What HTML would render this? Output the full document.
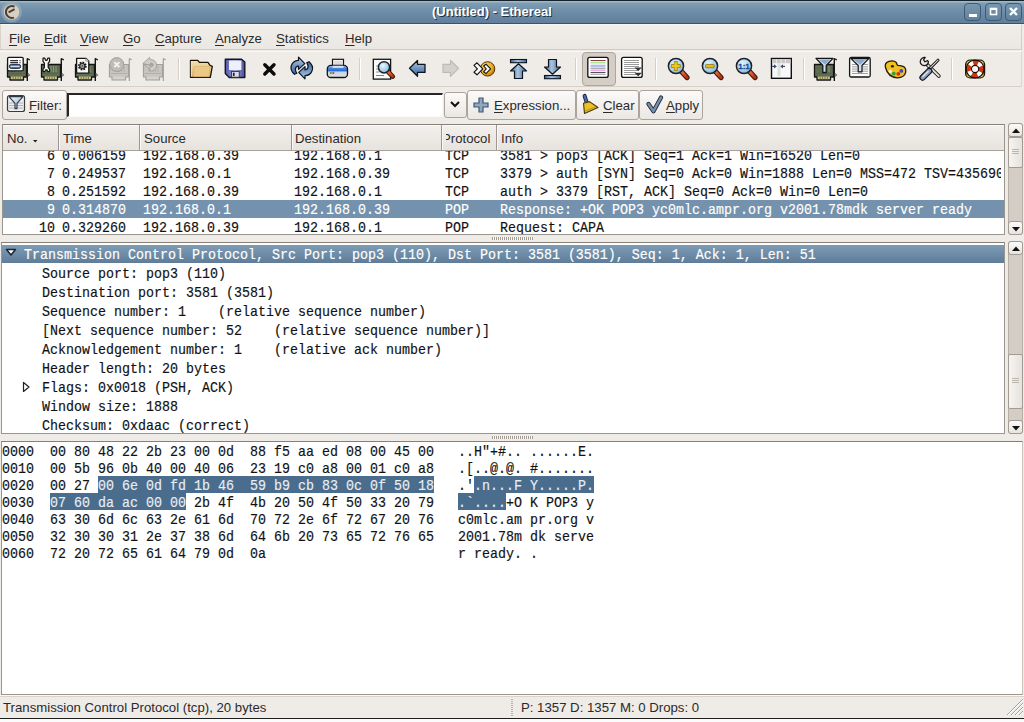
<!DOCTYPE html>
<html><head><meta charset="utf-8"><title>Ethereal</title><style>
*{margin:0;padding:0;box-sizing:border-box}
html,body{width:1024px;height:722px;overflow:hidden;background:#efebe7;font-family:"Liberation Sans",sans-serif;font-size:13.2px;color:#2a2a2a}
.a{position:absolute}
.u{text-decoration:underline;text-underline-offset:2px}
.m{font-family:"Liberation Mono",monospace;font-size:13.333px;white-space:pre;color:#111;transform:scaleY(1.11);transform-origin:0 0;-webkit-text-stroke:0.15px currentColor}
.btn{position:absolute;border:1px solid #aaa49d;border-radius:3px;background:linear-gradient(#fbfaf9,#ebe7e3)}
.sb{position:absolute;width:15px;background:#d4cdc5;border:1px solid #b5aea6;border-radius:3px}
.sbb{position:absolute;left:-1px;width:15px;height:14px;border:1px solid #a29b93;border-radius:3px;background:linear-gradient(#fcfbfa,#e8e3de)}
.thumb{position:absolute;left:-1px;width:15px;border:1px solid #a29b93;border-radius:2px;background:linear-gradient(90deg,#f6f4f2,#e6e1dc)}
.sel{background:#7492ad;color:#fff}
.ic{position:absolute;top:57px;width:24px;height:24px;overflow:visible}
.vsep{position:absolute;top:58px;width:2px;height:22px;border-left:1px solid #d5cfc8;border-right:1px solid #fff}
</style></head><body>
<div class="a" style="left:0;top:0;width:1024px;height:24px;background:linear-gradient(#a3b6c3 0,#a3b6c3 1px,#7e9db3 2px,#6c8ca8 50%,#617f9b 100%);border-top:1px solid #14222c;border-bottom:1px solid #3f5263"></div>
<svg class="a" style="left:0px;top:1px" width="24" height="23" viewBox="0 0 24 23"><circle cx="11.5" cy="11" r="10.5" fill="#9fb2bf" opacity=".55"/><circle cx="11.5" cy="11" r="7.8" fill="#d6cfc2"/><path d="M14.6 5.6 A6 6 0 1 0 14 16.6" fill="none" stroke="#4a4038" stroke-width="2"/><path d="M8.6 11.4 L14.6 8.2" stroke="#4a4038" stroke-width="2"/></svg>
<div class="a" style="left:433px;top:5px;color:#1e3346;font-weight:bold;font-size:13px;white-space:pre">(Untitled) - Ethereal</div>
<div class="a" style="left:432px;top:4px;color:#fff;font-weight:bold;font-size:13px;white-space:pre">(Untitled) - Ethereal</div>
<div class="a" style="left:964px;top:3px;width:17px;height:18px;border:1px solid #3e5b75;border-radius:4px;background:linear-gradient(#7898b0,#62819c)"></div>
<div class="a" style="left:985px;top:3px;width:17px;height:18px;border:1px solid #3e5b75;border-radius:4px;background:linear-gradient(#7898b0,#62819c)"></div>
<div class="a" style="left:1005px;top:3px;width:17px;height:18px;border:1px solid #3e5b75;border-radius:4px;background:linear-gradient(#7898b0,#62819c)"></div>
<svg class="a" style="left:964px;top:3px" width="60" height="18"><rect x="5" y="11" width="8" height="3" fill="#fff"/><rect x="26.5" y="5.5" width="6" height="6" fill="none" stroke="#fff" stroke-width="1.6"/><rect x="26" y="5" width="7" height="2" fill="#fff"/><path d="M46 5 L53 12 M53 5 L46 12" stroke="#fff" stroke-width="2.4"/></svg>
<div class="a" style="left:0;top:24px;width:1022px;height:26px;border-top:1px solid #f6f4f2;border-left:1px solid #d9d3cc;border-bottom:1px solid #d3ccc4;border-right:1px solid #d3ccc4;background:linear-gradient(#f1eee9,#ebe7e2)"></div>
<div class="a" style="left:9px;top:31px"><span class="u">F</span>ile</div>
<div class="a" style="left:44px;top:31px"><span class="u">E</span>dit</div>
<div class="a" style="left:80px;top:31px"><span class="u">V</span>iew</div>
<div class="a" style="left:123px;top:31px"><span class="u">G</span>o</div>
<div class="a" style="left:155px;top:31px"><span class="u">C</span>apture</div>
<div class="a" style="left:215px;top:31px"><span class="u">A</span>nalyze</div>
<div class="a" style="left:276px;top:31px"><span class="u">S</span>tatistics</div>
<div class="a" style="left:345px;top:31px"><span class="u">H</span>elp</div>
<div class="a" style="left:0;top:51px;width:1022px;height:36px;border-top:1px solid #f9f8f6;border-bottom:1px solid #d6d0c9;border-right:1px solid #ddd7d0"></div>
<div class="a" style="left:582px;top:52px;width:34px;height:34px;border:1px solid #aca59d;border-radius:4px;background:#d4cec7"></div>
<div class="vsep" style="left:178px"></div>
<div class="vsep" style="left:359px"></div>
<div class="vsep" style="left:575px"></div>
<div class="vsep" style="left:655px"></div>
<div class="vsep" style="left:803px"></div>
<div class="vsep" style="left:951px"></div>
<svg class="a" style="left:0;top:0;overflow:visible" width="1024" height="90" viewBox="0 0 1024 90"><defs>
<linearGradient id="gBlue" x1="0" y1="0" x2="0" y2="1"><stop offset="0" stop-color="#b9d0e8"/><stop offset=".5" stop-color="#6f95bf"/><stop offset="1" stop-color="#3e6592"/></linearGradient>
<linearGradient id="gBlueH" x1="0" y1="0" x2="1" y2="0"><stop offset="0" stop-color="#3e6592"/><stop offset=".45" stop-color="#a9c4e0"/><stop offset="1" stop-color="#456c98"/></linearGradient>
<linearGradient id="gFold" x1="0" y1="0" x2="0" y2="1"><stop offset="0" stop-color="#f3e2b0"/><stop offset="1" stop-color="#d9b36c"/></linearGradient>
<linearGradient id="gFlop" x1="0" y1="0" x2="1" y2="0"><stop offset="0" stop-color="#5559a8"/><stop offset=".5" stop-color="#9a9fd6"/><stop offset="1" stop-color="#4b4f98"/></linearGradient>
<radialGradient id="gLens" cx=".4" cy=".35" r=".7"><stop offset="0" stop-color="#e8f6ff"/><stop offset=".6" stop-color="#a8d4ee"/><stop offset="1" stop-color="#7da8c8"/></radialGradient>
<radialGradient id="gGold" cx=".35" cy=".35" r=".7"><stop offset="0" stop-color="#ffe070"/><stop offset=".7" stop-color="#e8a820"/><stop offset="1" stop-color="#b07010"/></radialGradient>
<linearGradient id="gHandle" x1="0" y1="0" x2="1" y2="1"><stop offset="0" stop-color="#f07040"/><stop offset="1" stop-color="#b03010"/></linearGradient>
</defs><g transform="translate(4 54)"><g>
 <path d="M3.5 10.5 H22.5 V23 H19.5 V26 H6 V23 H3.5 Z" fill="#5f6e52" stroke="#151515" stroke-width="1.3" stroke-linejoin="round"/>
 <path d="M5 19.5 H21 M5 14 H21" stroke="#55654a" stroke-width="1"/>
 <path d="M13 12v6M15.5 12v6M18 12v6" stroke="#93a07e" stroke-width=".9"/>
 <rect x="6.8" y="22.6" width="12" height="2.6" fill="#c9c38e"/>
 <path d="M9.2 22.6v2.6M11.6 22.6v2.6M14 22.6v2.6M16.4 22.6v2.6" stroke="#6e6e48" stroke-width=".9"/>
 <path d="M23.3 4.5 V27" stroke="#151515" stroke-width="1.4"/>
 <path d="M23 4.5 L25.8 5.8" stroke="#151515" stroke-width="1.3"/>
 <path d="M23.8 19 L25.8 21.2 L23.8 22.4" fill="#9aa08e" stroke="#444" stroke-width=".7"/>
</g><rect x="3.6" y="3.3" width="15.6" height="13.6" rx="1.3" fill="#fdfdfd" stroke="#151515" stroke-width="1.3"/><path d="M6.2 6.6H14M6.2 8.6H14" stroke="#333" stroke-width="1.1"/><path d="M15.5 6.6h1M15.5 8.6h1" stroke="#333" stroke-width="1.1"/><rect x="5.3" y="10.4" width="11.4" height="4" rx="2" fill="#5b7aa6" stroke="#1d2b44" stroke-width="1"/><path d="M6.5 12.4H15.5" stroke="#dfe8f4" stroke-width="1"/></g><g transform="translate(38 54)"><g>
 <path d="M3.5 10.5 H22.5 V23 H19.5 V26 H6 V23 H3.5 Z" fill="#5f6e52" stroke="#151515" stroke-width="1.3" stroke-linejoin="round"/>
 <path d="M5 19.5 H21 M5 14 H21" stroke="#55654a" stroke-width="1"/>
 <path d="M13 12v6M15.5 12v6M18 12v6" stroke="#93a07e" stroke-width=".9"/>
 <rect x="6.8" y="22.6" width="12" height="2.6" fill="#c9c38e"/>
 <path d="M9.2 22.6v2.6M11.6 22.6v2.6M14 22.6v2.6M16.4 22.6v2.6" stroke="#6e6e48" stroke-width=".9"/>
 <path d="M23.3 4.5 V27" stroke="#151515" stroke-width="1.4"/>
 <path d="M23 4.5 L25.8 5.8" stroke="#151515" stroke-width="1.3"/>
 <path d="M23.8 19 L25.8 21.2 L23.8 22.4" fill="#9aa08e" stroke="#444" stroke-width=".7"/>
</g><path d="M5 4.2 L6.8 4.2 L7.6 6.3 L9 6.3 L9.8 4.2 L11.6 4.2 L11.6 7.4 L10.2 9.2 L10.2 13.5 L11.6 15.3 L11.6 17.6 L9.8 17.6 L9 15.9 L7.6 15.9 L6.8 17.6 L5 17.6 L5 15.3 L6.4 13.5 L6.4 9.2 L5 7.4 Z" fill="#f4f4f4" stroke="#151515" stroke-width="1.2" stroke-linejoin="round"/></g><g transform="translate(72 54)"><g>
 <path d="M3.5 10.5 H22.5 V23 H19.5 V26 H6 V23 H3.5 Z" fill="#5f6e52" stroke="#151515" stroke-width="1.3" stroke-linejoin="round"/>
 <path d="M5 19.5 H21 M5 14 H21" stroke="#55654a" stroke-width="1"/>
 <path d="M13 12v6M15.5 12v6M18 12v6" stroke="#93a07e" stroke-width=".9"/>
 <rect x="6.8" y="22.6" width="12" height="2.6" fill="#c9c38e"/>
 <path d="M9.2 22.6v2.6M11.6 22.6v2.6M14 22.6v2.6M16.4 22.6v2.6" stroke="#6e6e48" stroke-width=".9"/>
 <path d="M23.3 4.5 V27" stroke="#151515" stroke-width="1.4"/>
 <path d="M23 4.5 L25.8 5.8" stroke="#151515" stroke-width="1.3"/>
 <path d="M23.8 19 L25.8 21.2 L23.8 22.4" fill="#9aa08e" stroke="#444" stroke-width=".7"/>
</g><path d="M4.6 4.3 H13.8 L16.8 7.2 V19.2 H4.6 Z" fill="#f7f7f7" stroke="#151515" stroke-width="1.3" stroke-linejoin="round"/><path d="M13.8 4.3 V7.2 H16.8" fill="#ddd" stroke="#777" stroke-width=".6"/><circle cx="10.3" cy="12" r="3.6" fill="#9a9a9a" stroke="#151515" stroke-width="1.6" stroke-dasharray="1.6 1.2"/><circle cx="10.3" cy="12" r="2.6" fill="#a5a5a5" stroke="#151515" stroke-width="1"/><circle cx="10.3" cy="12" r=".8" fill="#333"/></g><g transform="translate(106 54)"><g opacity="1">
 <path d="M3.5 10.5 H22.5 V23 H19.5 V26 H6 V23 H3.5 Z" fill="#c8c5c0" stroke="#a4a19c" stroke-width="1.2"/>
 <path d="M5 19.5 H21 M13 12v6M15.5 12v6M18 12v6" stroke="#b0ada8" stroke-width=".9"/>
 <rect x="6.8" y="22.6" width="12" height="2.6" fill="#d4d2ce"/>
 <path d="M23.3 4.5 V27 M23 4.5 L25.8 5.8" stroke="#a4a19c" stroke-width="1.2"/>
</g><circle cx="10.8" cy="10.6" r="7" fill="#bfbcb7" stroke="#a29f9a" stroke-width="1"/><path d="M8.3 8.1 L13.3 13.1 M13.3 8.1 L8.3 13.1" stroke="#f4f2f0" stroke-width="2"/></g><g transform="translate(140 54)"><g opacity="1">
 <path d="M3.5 10.5 H22.5 V23 H19.5 V26 H6 V23 H3.5 Z" fill="#c8c5c0" stroke="#a4a19c" stroke-width="1.2"/>
 <path d="M5 19.5 H21 M13 12v6M15.5 12v6M18 12v6" stroke="#b0ada8" stroke-width=".9"/>
 <rect x="6.8" y="22.6" width="12" height="2.6" fill="#d4d2ce"/>
 <path d="M23.3 4.5 V27 M23 4.5 L25.8 5.8" stroke="#a4a19c" stroke-width="1.2"/>
</g><path d="M2.8 9.6 L9.6 3.4 L10 5.6 Q15.8 5.4 16.6 11 Q16.8 15.8 12 17 L8.6 17 L10.6 12 Q13 12.4 13 10.6 Q12.8 8.8 10.6 9 L10.8 11.2 Z" fill="#cfccc7" stroke="#a29f9a" stroke-width=".9" stroke-linejoin="round"/><path d="M3 9.6 L11 16.4" stroke="#a29f9a" stroke-width=".9"/><circle cx="11.4" cy="11" r="1.6" fill="none" stroke="#a29f9a" stroke-width=".9"/></g><g transform="translate(186 54)"><path d="M4.5 6.3 H11.8 L13.4 8.4 H22 L24 11.3 L26.3 12.4 L24.3 23.4 H4.5 Z" fill="url(#gFold)" stroke="#1b1308" stroke-width="1.3" stroke-linejoin="round"/><path d="M7.3 22.6 L8 13.6 Q8.2 12.4 9.5 12.4 H24.2 L22.8 22.6 Z" fill="#ecc887" stroke="#d6ae68" stroke-width=".6"/><path d="M5.3 7 V22.6" stroke="#fff3d0" stroke-width=".9"/></g><g transform="translate(220 54)"><path d="M5.3 5.3 H21.5 L24.8 8 V23.5 H9.3 L5.3 19.6 Z" fill="url(#gFlop)" stroke="#141428" stroke-width="1.4" stroke-linejoin="round"/><rect x="9" y="6.6" width="12.4" height="9.4" fill="#eef0fa"/><rect x="11.4" y="17.6" width="7.8" height="5.6" fill="#dcdcea" stroke="#23233a" stroke-width=".8"/><rect x="12.9" y="18.7" width="1.7" height="3.3" fill="#222"/></g><path d="M264.8 64.8 L274 74 M274 64.8 L264.8 74" stroke="#0a0a0a" stroke-width="3.4" stroke-linecap="round"/><g transform="translate(286 54)"><path d="M8.5 20.3 Q4 16.5 5.2 12 Q6.8 6.5 12.5 6.3 L12.5 3.2 L18.8 9.6 L12.5 15.4 L12.5 12.2 Q9.8 12.4 9.4 14.8 Q9.3 17.2 10.8 19.3 Z" fill="url(#gBlue)" stroke="#0d1420" stroke-width="1.2" stroke-linejoin="round"/><g transform="rotate(180 15.75 14)"><path d="M8.5 20.3 Q4 16.5 5.2 12 Q6.8 6.5 12.5 6.3 L12.5 3.2 L18.8 9.6 L12.5 15.4 L12.5 12.2 Q9.8 12.4 9.4 14.8 Q9.3 17.2 10.8 19.3 Z" fill="url(#gBlue)" stroke="#0d1420" stroke-width="1.2" stroke-linejoin="round"/></g></g><g transform="translate(322 54)"><defs><linearGradient id="gPr" x1="0" y1="0" x2="0" y2="1"><stop offset="0" stop-color="#d8e6f4"/><stop offset=".2" stop-color="#4a90e8"/><stop offset=".45" stop-color="#2a6ad0"/><stop offset=".55" stop-color="#c8d4e4"/><stop offset="1" stop-color="#e4e2e0"/></linearGradient></defs><rect x="10.5" y="5.3" width="11" height="9" fill="#f2f2f2" stroke="#151515" stroke-width="1.2"/><path d="M12.3 8h7.5M12.3 10h7.5" stroke="#bbb" stroke-width=".8"/><rect x="5.3" y="11.3" width="20.2" height="12.2" rx="3.6" fill="url(#gPr)" stroke="#151515" stroke-width="1.3"/><path d="M10.6 11.6 H21.4 V14 H10.6Z" fill="#eef2f8" opacity=".7"/><rect x="8" y="18.2" width="1.6" height="1.6" fill="#2a8a3a"/><rect x="10.4" y="18.2" width="1.8" height="1.6" fill="#c02828"/></g><g transform="translate(368 54)"><rect x="5.3" y="5.3" width="17.3" height="19.8" fill="#fbfbfb" stroke="#151515" stroke-width="1.3"/><path d="M8 12h3M8 15h3M8 18h3.5M8 21.5h8" stroke="#777" stroke-width=".8"/><path d="M8 21.5h8" stroke="#c06060" stroke-width=".8"/><path d="M20.2 17.8 L24.8 22.6" stroke="#3a1408" stroke-width="4.6" stroke-linecap="round"/><path d="M20.2 17.8 L24.8 22.6" stroke="url(#gHandle)" stroke-width="2.8" stroke-linecap="round"/><circle cx="16" cy="13.3" r="5.6" fill="url(#gLens)" stroke="#1e2228" stroke-width="1.5"/></g><path d="M409.5 68.3 L417.5 60.5 V64.3 H425 V72.4 H417.5 V76.3 Z" fill="url(#gBlue)" stroke="#0d1420" stroke-width="1.3" stroke-linejoin="round"/><path d="M458.5 68.3 L450.5 60.5 V64.3 H443 V72.4 H450.5 V76.3 Z" fill="#d4d1cd" stroke="#bdbab5" stroke-width="1.2" stroke-linejoin="round"/><g transform="translate(470 54)"><circle cx="17.6" cy="14.9" r="7.2" fill="url(#gGold)" stroke="#5a3608" stroke-width="1"/><path d="M4 11.4 L7 8.8 L12.8 14.8 L7 20.8 L4 18.2 L7.4 14.8 Z" fill="#fafafa" stroke="#151515" stroke-width="1.2" stroke-linejoin="round"/><path d="M13.6 12 L16 10.2 L20.6 14.9 L16 19.6 L13.6 17.8 L16.2 14.9 Z" fill="#fafafa" stroke="#151515" stroke-width="1.1" stroke-linejoin="round"/></g><rect x="510.5" y="59.5" width="16" height="3.2" fill="url(#gBlueH)" stroke="#0d1420" stroke-width="1.1"/><path d="M518.5 63.8 L526.5 71 H522.5 V78.5 H514.5 V71 H510.5 Z" fill="url(#gBlueH)" stroke="#0d1420" stroke-width="1.2" stroke-linejoin="round"/><path d="M552.5 74.2 L560.5 67 H556.5 V59.5 H548.5 V67 H544.5 Z" fill="url(#gBlueH)" stroke="#0d1420" stroke-width="1.2" stroke-linejoin="round"/><rect x="544.5" y="75.5" width="16" height="3.2" fill="url(#gBlueH)" stroke="#0d1420" stroke-width="1.1"/><rect x="587.8" y="57.4" width="20.4" height="20" rx="2" fill="#fff" stroke="#111" stroke-width="1.3"/><path d="M590.5 60.5H605.5" stroke="#8a4040" stroke-width="1"/><path d="M590.5 62.6H605.5" stroke="#a8e890" stroke-width="1.8"/><path d="M590.5 65.8H605.5" stroke="#b0bce8" stroke-width="2.2"/><path d="M590.5 68.2H605.5" stroke="#888" stroke-width="1"/><path d="M590.5 70.3H605.5" stroke="#f0a8f0" stroke-width="1.8"/><path d="M590.5 72.5H605.5" stroke="#555" stroke-width="1"/><path d="M590.5 74.3H605.5" stroke="#aaa" stroke-width="1.2"/><rect x="621.6" y="57.4" width="20.6" height="20" rx="2" fill="#fff" stroke="#111" stroke-width="1.3"/><path d="M624 60.5H639M624 62.5H639M624 64.5H639M624 66.5H639M624 68.5H636M624 70.5H639M624 72.5H636M624 74.5H639" stroke="#9a9a9a" stroke-width="1"/><path d="M634.5 67.5 H642 L638.2 71 Z M634.5 72.8 H642 L638.2 76.3 Z" fill="#333"/><g transform="translate(664 54)"><g>
 <path d="M17.5 17.5 L23 23.5" stroke="#3a1408" stroke-width="5.2" stroke-linecap="round"/>
 <path d="M17.5 17.5 L23 23.5" stroke="url(#gHandle)" stroke-width="3.2" stroke-linecap="round"/>
 <circle cx="12" cy="12" r="7.6" fill="url(#gLens)" stroke="#1e2228" stroke-width="1.5"/>
</g><path d="M10.3 7.5h3v3h3v3h-3v3h-3v-3h-3v-3h3z" fill="#f0c818" stroke="#a07808" stroke-width=".8"/></g><g transform="translate(698 54)"><g>
 <path d="M17.5 17.5 L23 23.5" stroke="#3a1408" stroke-width="5.2" stroke-linecap="round"/>
 <path d="M17.5 17.5 L23 23.5" stroke="url(#gHandle)" stroke-width="3.2" stroke-linecap="round"/>
 <circle cx="12" cy="12" r="7.6" fill="url(#gLens)" stroke="#1e2228" stroke-width="1.5"/>
</g><rect x="7.6" y="10.4" width="8.6" height="3.4" rx=".8" fill="#e8b818" stroke="#906808" stroke-width=".8"/></g><g transform="translate(732 54)"><g>
 <path d="M17.5 17.5 L23 23.5" stroke="#3a1408" stroke-width="5.2" stroke-linecap="round"/>
 <path d="M17.5 17.5 L23 23.5" stroke="url(#gHandle)" stroke-width="3.2" stroke-linecap="round"/>
 <circle cx="12" cy="12" r="7.6" fill="url(#gLens)" stroke="#1e2228" stroke-width="1.5"/>
</g><text x="12" y="15.3" text-anchor="middle" font-family="Liberation Sans" font-weight="bold" font-size="8" fill="#1f4e96" stroke="#1f4e96" stroke-width=".3">1:1</text></g><g transform="translate(766 54)"><rect x="5.5" y="4.5" width="19.8" height="19.8" fill="#f8f8f8" stroke="#111" stroke-width="1.4"/><rect x="6.2" y="5.2" width="18.4" height="4" fill="#c8c8c8"/><path d="M10.5 5.2v4M15 5.2v4M19.5 5.2v4" stroke="#eee" stroke-width=".8"/><rect x="11.5" y="9.2" width="3" height="13" fill="#dedede"/><path d="M6.2 12.4H9.5 M15.5 12.4H19" stroke="#3a5068" stroke-width="1.2"/><path d="M10.8 12.4 L8 10.3 V14.5 Z M14.3 12.4 L17 10.3 V14.5 Z" fill="#3a5068"/></g><g transform="translate(810 54)"><g transform="translate(1 0)">
 <path d="M3.5 10.5 H22.5 V23 H19.5 V26 H6 V23 H3.5 Z" fill="#5f6e52" stroke="#151515" stroke-width="1.3" stroke-linejoin="round"/>
 <path d="M5 19.5 H21 M5 14 H21" stroke="#55654a" stroke-width="1"/>
 <path d="M13 12v6M15.5 12v6M18 12v6" stroke="#93a07e" stroke-width=".9"/>
 <rect x="6.8" y="22.6" width="12" height="2.6" fill="#c9c38e"/>
 <path d="M9.2 22.6v2.6M11.6 22.6v2.6M14 22.6v2.6M16.4 22.6v2.6" stroke="#6e6e48" stroke-width=".9"/>
 <path d="M23.3 4.5 V27" stroke="#151515" stroke-width="1.4"/>
 <path d="M23 4.5 L25.8 5.8" stroke="#151515" stroke-width="1.3"/>
 <path d="M23.8 19 L25.8 21.2 L23.8 22.4" fill="#9aa08e" stroke="#444" stroke-width=".7"/>
</g><path d="M6 4.4 H23 L16.2 11.5 V18.5 H12.8 V11.5 Z" fill="#cfdff0" stroke="#151515" stroke-width="1.3" stroke-linejoin="round"/><path d="M8.5 5.6 H20.5 L15 10.5 Z" fill="#8eaacb"/></g><g transform="translate(845 54)"><rect x="4.6" y="3.5" width="20.6" height="19.5" rx="1.5" fill="#fafafa" stroke="#151515" stroke-width="1.3"/><path d="M7 10.5H23M7 12.8H23M7 15H23M7 17.2H23M7 19.5H23" stroke="#a0a0a0" stroke-width="1"/><path d="M6 4.6 H23.8 L17 11.5 V17.8 H13.2 V11.5 Z" fill="#cfdff0" stroke="#151515" stroke-width="1.2" stroke-linejoin="round"/><path d="M8.5 5.6 H21 L15.2 10.6 Z" fill="#8eaacb"/></g><g transform="translate(880 54)"><path d="M5.5 13.5 Q4.3 8.7 9 7.3 Q13.8 6 16.3 8.5 Q17 10.8 17.8 11.4 Q20 11.4 23 12.4 Q26.5 14 25.6 18.6 Q24.3 23.5 17.5 23.8 Q8 23.4 5.5 13.5 Z" fill="#f0c020" stroke="#2a1a04" stroke-width="1.3"/><ellipse cx="12.4" cy="12.2" rx="1.5" ry="1.2" fill="#2a1a04"/><circle cx="10.3" cy="17.3" r="1.7" fill="#f0f0e8"/><circle cx="13.8" cy="19.6" r="1.9" fill="#30a030"/><circle cx="18.3" cy="19.8" r="1.9" fill="#d82818"/><circle cx="21.3" cy="16.9" r="1.9" fill="#3848c0"/></g><g transform="translate(915 54)"><path d="M11 9.5 L23.8 22" stroke="#151515" stroke-width="3.8" stroke-linecap="round"/><path d="M11 9.5 L23.8 22" stroke="#e0e0e0" stroke-width="1.8" stroke-linecap="round"/><path d="M5.2 8.4 Q5.2 4.4 9.2 3.4 L10.2 3.4 L8.6 5.8 L10 7.8 L12.6 6.6 L13.4 7.6 Q13.2 11.6 9 11.6 Q6 11.4 5.2 8.4 Z" fill="#e8e8e8" stroke="#151515" stroke-width="1.2" stroke-linejoin="round"/><path d="M23 6.2 L13.8 15.4" stroke="#151515" stroke-width="3" stroke-linecap="round"/><path d="M23 6.2 L13.8 15.4" stroke="#d8d8d8" stroke-width="1.1" stroke-linecap="round"/><path d="M14.2 17 L7.6 23.6" stroke="#151515" stroke-width="6.4" stroke-linecap="round"/><path d="M14.2 17 L7.6 23.6" stroke="#8fa4c4" stroke-width="4" stroke-linecap="round"/><path d="M13.2 17.3 L8 22.5" stroke="#dfe8f4" stroke-width="1.1" stroke-linecap="round"/></g><g transform="translate(960 54)"><rect x="5.6" y="6" width="19" height="18" rx="4.5" fill="#a49a38" stroke="#1e1806" stroke-width="1.2"/><path d="M7.5 9 Q8 7.5 9.5 7.3 M21 7.3 Q22.6 7.6 22.8 9 M22.8 21 Q22.5 22.5 21 22.7 M9.5 22.7 Q7.8 22.5 7.5 21" stroke="#d8cc70" stroke-width="1" fill="none"/><circle cx="15.1" cy="15" r="6.3" fill="none" stroke="#fff" stroke-width="5.2"/><circle cx="15.1" cy="15" r="6.3" fill="none" stroke="#cc3614" stroke-width="5.2" stroke-dasharray="5.9 4" stroke-dashoffset="2.95" transform="rotate(-90 15.1 15)"/><circle cx="15.1" cy="15" r="8.9" fill="none" stroke="#1a0a04" stroke-width="1.1"/><circle cx="15.1" cy="15" r="3.6" fill="#f8f8f8" stroke="#1a0a04" stroke-width="1.1"/></g></svg>
<div class="btn" style="left:2px;top:90px;width:65px;height:30px"></div>
<svg class="a" style="left:6px;top:94px" width="20" height="20" viewBox="0 0 20 20"><defs><linearGradient id="fg" x1="0" y1="0" x2="1" y2="1"><stop offset="0" stop-color="#f4f8fc"/><stop offset="1" stop-color="#8eaed0"/></linearGradient></defs><rect x="1.5" y="1.5" width="17" height="16" rx="2" fill="#eceeef" stroke="#3b3b3b" stroke-width="1.2"/><path d="M3 9h14M3 11.5h14M3 14h14" stroke="#a8acb0" stroke-width=".9"/><path d="M3 2.6 L17 2.6 L11 9.4 L11 14.6 L9 14.6 L9 9.4 Z" fill="url(#fg)" stroke="#2e3640" stroke-width="1.1" stroke-linejoin="round"/></svg>
<div class="a" style="left:29px;top:98px"><span class="u">F</span>ilter:</div>
<div class="a" style="left:67px;top:93px;width:376px;height:24px;background:#fff;border:1px solid #85807a;border-top:2px solid #262626;border-left:2px solid #262626;border-right-color:#faf9f7;border-bottom-color:#faf9f7"></div>
<div class="btn" style="left:444px;top:92px;width:23px;height:26px"></div>
<svg class="a" style="left:449px;top:99px" width="12" height="10"><path d="M2 3 L6 7 L10 3" fill="none" stroke="#111" stroke-width="2"/></svg>
<div class="btn" style="left:467px;top:90px;width:109px;height:30px"></div>
<svg class="a" style="left:472px;top:96px" width="18" height="18" viewBox="0 0 18 18"><path d="M7 2h4v5h5v4h-5v5H7v-5H2V7h5z" fill="#8fa8c0" stroke="#3c5870" stroke-width="1.2"/></svg>
<div class="a" style="left:494px;top:98px"><span class="u">E</span>xpression...</div>
<div class="btn" style="left:576px;top:90px;width:63px;height:30px"></div>
<svg class="a" style="left:580px;top:93px" width="22" height="22" viewBox="0 0 22 22"><path d="M4.6 2.8 L7 10.5" stroke="#1a2440" stroke-width="4" stroke-linecap="round"/><path d="M4.6 2.8 L7 10.5" stroke="#4868b0" stroke-width="2.2" stroke-linecap="round"/><path d="M3.5 10.2 L9.5 8.6 L18 14.5 L4.5 20.5 Z" fill="#e8c028" stroke="#4a3808" stroke-width="1.1" stroke-linejoin="round"/><path d="M5 18 L15.5 14" stroke="#b08a10" stroke-width=".8"/></svg>
<div class="a" style="left:603px;top:98px"><span class="u">C</span>lear</div>
<div class="btn" style="left:639px;top:90px;width:64px;height:30px"></div>
<svg class="a" style="left:644px;top:94px" width="20" height="20" viewBox="0 0 20 20"><path d="M4.5 10 L9.5 17.2 L17 3.5" fill="none" stroke="#222a36" stroke-width="4.2" stroke-linejoin="round" stroke-linecap="round"/><path d="M4.5 10 L9.5 17.2 L17 3.5" fill="none" stroke="#7890b0" stroke-width="2.4" stroke-linejoin="round" stroke-linecap="round"/></svg>
<div class="a" style="left:666px;top:98px"><span class="u">A</span>pply</div>
<div class="a" style="left:2px;top:124px;width:1003px;height:111px;background:#fff;border:1px solid #9a958f;border-top-color:#85807a;overflow:hidden">
<div class="a" style="left:0;top:0;width:1001px;height:26px;background:linear-gradient(#f2efec,#e7e3de);border-top:1px solid #fbfaf9;border-bottom:1px solid #a8a29b"></div>
<div class="a" style="left:55px;top:0;width:1px;height:25px;background:#9d978f"></div><div class="a" style="left:56px;top:1px;width:1px;height:24px;background:#faf9f7"></div>
<div class="a" style="left:136px;top:0;width:1px;height:25px;background:#9d978f"></div><div class="a" style="left:137px;top:1px;width:1px;height:24px;background:#faf9f7"></div>
<div class="a" style="left:288px;top:0;width:1px;height:25px;background:#9d978f"></div><div class="a" style="left:289px;top:1px;width:1px;height:24px;background:#faf9f7"></div>
<div class="a" style="left:438px;top:0;width:1px;height:25px;background:#9d978f"></div><div class="a" style="left:439px;top:1px;width:1px;height:24px;background:#faf9f7"></div>
<div class="a" style="left:493px;top:0;width:1px;height:25px;background:#9d978f"></div><div class="a" style="left:494px;top:1px;width:1px;height:24px;background:#faf9f7"></div>
<div class="a" style="left:4px;top:6px">No.</div>
<svg class="a" style="left:30px;top:15px" width="5" height="3"><path d="M0 0 H4.5 L2.25 2.6Z" fill="#222"/></svg>
<div class="a" style="left:60px;top:6px">Time</div>
<div class="a" style="left:141px;top:6px">Source</div>
<div class="a" style="left:292px;top:6px">Destination</div>
<div class="a" style="left:443px;top:6px;width:50px;overflow:hidden;white-space:pre"><span style="margin-left:-4px">Protocol</span></div>
<div class="a" style="left:498px;top:6px">Info</div>
<div class="a" style="left:0;top:26px;width:1001px;height:83px;overflow:hidden">
<div class="a" style="left:0;top:-5px;width:1001px;height:18px"></div>
<div class="a m" style="left:44px;top:-3px;color:#111">6</div>
<div class="a m" style="left:59px;top:-3px;color:#111">0.006159</div>
<div class="a m" style="left:140px;top:-3px;color:#111">192.168.0.39</div>
<div class="a m" style="left:291px;top:-3px;color:#111">192.168.0.1</div>
<div class="a m" style="left:442px;top:-3px;color:#111">TCP</div>
<div class="a m" style="left:497px;top:-3px;width:501px;overflow:hidden;color:#111">3581 &gt; pop3 [ACK] Seq=1 Ack=1 Win=16520 Len=0</div>
<div class="a" style="left:0;top:13px;width:1001px;height:18px"></div>
<div class="a m" style="left:44px;top:15px;color:#111">7</div>
<div class="a m" style="left:59px;top:15px;color:#111">0.249537</div>
<div class="a m" style="left:140px;top:15px;color:#111">192.168.0.1</div>
<div class="a m" style="left:291px;top:15px;color:#111">192.168.0.39</div>
<div class="a m" style="left:442px;top:15px;color:#111">TCP</div>
<div class="a m" style="left:497px;top:15px;width:501px;overflow:hidden;color:#111">3379 &gt; auth [SYN] Seq=0 Ack=0 Win=1888 Len=0 MSS=472 TSV=4356906</div>
<div class="a" style="left:0;top:31px;width:1001px;height:18px"></div>
<div class="a m" style="left:44px;top:33px;color:#111">8</div>
<div class="a m" style="left:59px;top:33px;color:#111">0.251592</div>
<div class="a m" style="left:140px;top:33px;color:#111">192.168.0.39</div>
<div class="a m" style="left:291px;top:33px;color:#111">192.168.0.1</div>
<div class="a m" style="left:442px;top:33px;color:#111">TCP</div>
<div class="a m" style="left:497px;top:33px;width:501px;overflow:hidden;color:#111">auth &gt; 3379 [RST, ACK] Seq=0 Ack=0 Win=0 Len=0</div>
<div class="a sel" style="left:0;top:49px;width:1001px;height:18px"></div>
<div class="a m" style="left:44px;top:51px;color:#fff">9</div>
<div class="a m" style="left:59px;top:51px;color:#fff">0.314870</div>
<div class="a m" style="left:140px;top:51px;color:#fff">192.168.0.1</div>
<div class="a m" style="left:291px;top:51px;color:#fff">192.168.0.39</div>
<div class="a m" style="left:442px;top:51px;color:#fff">POP</div>
<div class="a m" style="left:497px;top:51px;width:501px;overflow:hidden;color:#fff">Response: +OK POP3 yc0mlc.ampr.org v2001.78mdk server ready</div>
<div class="a" style="left:0;top:67px;width:1001px;height:18px"></div>
<div class="a m" style="left:36px;top:69px;color:#111">10</div>
<div class="a m" style="left:59px;top:69px;color:#111">0.329260</div>
<div class="a m" style="left:140px;top:69px;color:#111">192.168.0.39</div>
<div class="a m" style="left:291px;top:69px;color:#111">192.168.0.1</div>
<div class="a m" style="left:442px;top:69px;color:#111">POP</div>
<div class="a m" style="left:497px;top:69px;width:501px;overflow:hidden;color:#111">Request: CAPA</div>
</div></div>
<div class="sb" style="left:1008px;top:123px;height:112px">
<div class="sbb" style="top:-1px"></div>
<svg class="a" style="left:2px;top:3px" width="10" height="7"><path d="M1 6 L5 1.5 L9 6Z" fill="#111"/></svg>
<div class="thumb" style="top:13px;height:31px"></div>
<div class="a" style="left:3px;top:25px;width:7px;height:1px;background:#bdb6ae;box-shadow:0 2px #bdb6ae,0 4px #bdb6ae"></div>
<div class="sbb" style="top:97px"></div>
<svg class="a" style="left:2px;top:102px" width="10" height="7"><path d="M1 1 L5 5.5 L9 1Z" fill="#111"/></svg>
</div>
<div class="a" style="left:0;top:235px;width:1024px;height:7px;background:#efebe7"></div>
<div class="a" style="left:492px;top:237px;width:41px;height:3px;background:repeating-linear-gradient(90deg,#a29b93 0 1px,#fbfaf8 1px 2px)"></div>
<div class="a" style="left:1px;top:242px;width:1004px;height:192px;background:#fff;border:1px solid #9a958f;border-top-color:#85807a;overflow:hidden">
<div class="a sel" style="left:0;top:2px;width:1002px;height:18px;background:linear-gradient(#7f9cb5,#6e8ca7 50%,#5f7d98)"></div>
<svg class="a" style="left:3px;top:5px" width="12" height="9"><path d="M1.5 1.5 L10.5 1.5 L6 7 Z" fill="#fff" stroke="#1b2530" stroke-width="1.5" stroke-linejoin="round"/></svg>
<div class="a m" style="left:22px;top:4px;color:#fff">Transmission Control Protocol, Src Port: pop3 (110), Dst Port: 3581 (3581), Seq: 1, Ack: 1, Len: 51</div>
<div class="a m" style="left:40px;top:23px;color:#111">Source port: pop3 (110)</div>
<div class="a m" style="left:40px;top:42px;color:#111">Destination port: 3581 (3581)</div>
<div class="a m" style="left:40px;top:61px;color:#111">Sequence number: 1    (relative sequence number)</div>
<div class="a m" style="left:40px;top:80px;color:#111">[Next sequence number: 52    (relative sequence number)]</div>
<div class="a m" style="left:40px;top:99px;color:#111">Acknowledgement number: 1    (relative ack number)</div>
<div class="a m" style="left:40px;top:118px;color:#111">Header length: 20 bytes</div>
<svg class="a" style="left:20px;top:138px" width="9" height="12"><path d="M1.5 1.5 L1.5 10.5 L7 6 Z" fill="#fff" stroke="#222" stroke-width="1.2" stroke-linejoin="round"/></svg>
<div class="a m" style="left:40px;top:137px;color:#111">Flags: 0x0018 (PSH, ACK)</div>
<div class="a m" style="left:40px;top:156px;color:#111">Window size: 1888</div>
<div class="a m" style="left:40px;top:175px;color:#111">Checksum: 0xdaac (correct)</div>
</div>
<div class="sb" style="left:1008px;top:241px;height:193px">
<div class="sbb" style="top:-1px"></div>
<svg class="a" style="left:2px;top:3px" width="10" height="7"><path d="M1 6 L5 1.5 L9 6Z" fill="#111"/></svg>
<div class="thumb" style="top:112px;height:55px"></div>
<div class="a" style="left:3px;top:136px;width:7px;height:1px;background:#bdb6ae;box-shadow:0 2px #bdb6ae,0 4px #bdb6ae"></div>
<div class="sbb" style="top:178px"></div>
<svg class="a" style="left:2px;top:183px" width="10" height="7"><path d="M1 1 L5 5.5 L9 1Z" fill="#111"/></svg>
</div>
<div class="a" style="left:492px;top:436px;width:41px;height:3px;background:repeating-linear-gradient(90deg,#a29b93 0 1px,#fbfaf8 1px 2px)"></div>
<div class="a" style="left:1px;top:441px;width:1022px;height:254px;background:#fff;border:1px solid #9a958f;border-top-color:#85807a;border-right-color:#c9c3bc;overflow:hidden">
<div class="a" style="left:96px;top:34px;width:336px;height:17px;background:#4a6c8d"></div>
<div class="a" style="left:472px;top:34px;width:120px;height:17px;background:#4a6c8d"></div>
<div class="a" style="left:48px;top:51px;width:136px;height:17px;background:#4a6c8d"></div>
<div class="a" style="left:456px;top:51px;width:48px;height:17px;background:#4a6c8d"></div>
<div class="a m hx" style="left:0px;top:2px">0000</div>
<div class="a m hx" style="left:48px;top:2px">00 80 48 22 2b 23 00 0d  88 f5 aa ed 08 00 45 00</div>
<div class="a m hx" style="left:456px;top:2px">..H&quot;+#.. ......E.</div>
<div class="a m hx" style="left:0px;top:19px">0010</div>
<div class="a m hx" style="left:48px;top:19px">00 5b 96 0b 40 00 40 06  23 19 c0 a8 00 01 c0 a8</div>
<div class="a m hx" style="left:456px;top:19px">.[..@.@. #.......</div>
<div class="a m hx" style="left:0px;top:36px">0020</div>
<div class="a m hx" style="left:48px;top:36px">00 27 <span style="color:#e8eef4">00 6e 0d fd 1b 46  59 b9 cb 83 0c 0f 50 18</span></div>
<div class="a m hx" style="left:456px;top:36px">.&#x27;<span style="color:#e8eef4">.n...F Y.....P.</span></div>
<div class="a m hx" style="left:0px;top:53px">0030</div>
<div class="a m hx" style="left:48px;top:53px"><span style="color:#e8eef4">07 60 da ac 00 00</span> 2b 4f  4b 20 50 4f 50 33 20 79</div>
<div class="a m hx" style="left:456px;top:53px"><span style="color:#e8eef4">.`....</span>+O K POP3 y</div>
<div class="a m hx" style="left:0px;top:70px">0040</div>
<div class="a m hx" style="left:48px;top:70px">63 30 6d 6c 63 2e 61 6d  70 72 2e 6f 72 67 20 76</div>
<div class="a m hx" style="left:456px;top:70px">c0mlc.am pr.org v</div>
<div class="a m hx" style="left:0px;top:87px">0050</div>
<div class="a m hx" style="left:48px;top:87px">32 30 30 31 2e 37 38 6d  64 6b 20 73 65 72 76 65</div>
<div class="a m hx" style="left:456px;top:87px">2001.78m dk serve</div>
<div class="a m hx" style="left:0px;top:104px">0060</div>
<div class="a m hx" style="left:48px;top:104px">72 20 72 65 61 64 79 0d  0a</div>
<div class="a m hx" style="left:456px;top:104px">r ready. .</div>
</div>
<div class="a" style="left:0;top:695px;width:1024px;height:2px;border-top:1px solid #fbfaf9;border-bottom:1px solid #d8d2cb"></div>
<div class="a" style="left:3px;top:700px;white-space:pre">Transmission Control Protocol (tcp), 20 bytes</div>
<div class="a" style="left:511px;top:699px;width:2px;height:18px;background:repeating-linear-gradient(#b9b2aa 0 1px,transparent 1px 2px)"></div>
<div class="a" style="left:521px;top:700px;white-space:pre">P: 1357 D: 1357 M: 0 Drops: 0</div>
<svg class="a" style="left:1004px;top:698px" width="20" height="20"><path d="M19 1 L3 17 M19 5 L7 17 M19 9 L11 17 M19 13 L15 17" stroke="#a9a29a" stroke-width="1"/><path d="M19 2 L4 17 M19 6 L8 17 M19 10 L12 17 M19 14 L16 17" stroke="#fff" stroke-width="1"/></svg>
<div class="a" style="left:0;top:718px;width:1024px;height:1px;background:#1e1e1e"></div>
<div class="a" style="left:0;top:719px;width:1024px;height:3px;background:#fbfbfb"></div>
</body></html>
